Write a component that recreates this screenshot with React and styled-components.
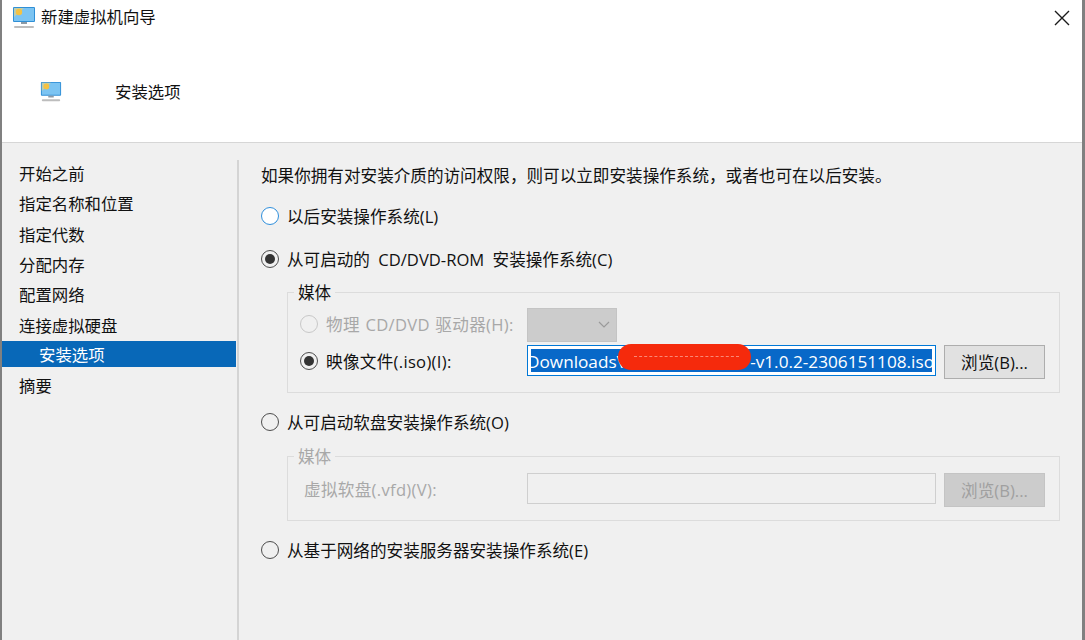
import styled, { createGlobalStyle } from "styled-components";

const GlobalStyle = createGlobalStyle`
  html, body {
    margin: 0;
    padding: 0;
    background: #f0f0f0;
  }
  * {
    box-sizing: border-box;
  }
`;

const steps = ["开始之前", "指定名称和位置", "指定代数", "分配内存", "配置网络", "连接虚拟硬盘", "安装选项", "摘要"];

function VmIcon({ size }) {
  return (
    <svg width={size} height={size} viewBox="0 0 24 24">
      <rect x="1" y="1" width="22" height="15" rx="1" fill="#2f8fd6" />
      <rect x="2" y="2" width="20" height="13" fill="#7cc4f2" />
      <path d="M2 2h10L2 11z" fill="#f7d774" opacity="0.55" />
      <circle cx="7" cy="6" r="3.2" fill="#f5c242" />
      <rect x="9" y="16" width="6" height="2" fill="#8c9aa6" />
      <rect x="2" y="20" width="20" height="2" rx="1" fill="#bdbdbd" />
    </svg>
  );
}

export default function App() {
  return (
    <>
      <GlobalStyle />
      <Window>
        <Header>
          <TitleBar>
            <VmIcon size={24} />
            <Title>新建虚拟机向导</Title>
            <CloseIcon width="16" height="16" viewBox="0 0 16 16">
              <path d="M1 1l14 14M15 1L1 15" stroke="#1a1a1a" strokeWidth="1.4" />
            </CloseIcon>
          </TitleBar>
          <PageHead>
            <VmIcon size={22} />
            <PageTitle>安装选项</PageTitle>
          </PageHead>
        </Header>
        <Body>
          <Sidebar>
            {steps.map((step, i) => (
              <Step key={step} $active={i === 6}>{step}</Step>
            ))}
          </Sidebar>
          <Content>
            <Intro>如果你拥有对安装介质的访问权限，则可以立即安装操作系统，或者也可在以后安装。</Intro>
            <Option $top={16}>
              <Radio $focus />
              以后安装操作系统(L)
            </Option>
            <Option $top={19}>
              <Radio $checked />
              从可启动的 CD/DVD-ROM 安装操作系统(C)
            </Option>
            <Group $top={21} $height={101}>
              <Legend>媒体</Legend>
              <GroupRow $height={34} $top={15}>
                <RowLabel $disabled>
                  <Radio $disabled />
                  物理 CD/DVD 驱动器(H):
                </RowLabel>
                <Select>
                  <svg width="12" height="8" viewBox="0 0 12 8">
                    <path d="M1 1l5 5 5-5" fill="none" stroke="#9a9a9a" strokeWidth="1.2" />
                  </svg>
                </Select>
              </GroupRow>
              <GroupRow $height={34} $top={3}>
                <RowLabel>
                  <Radio $checked />
                  映像文件(.iso)(I):
                </RowLabel>
                <PathInput>
                  <Selection>
                    <span>Downloads\</span>
                    <span>-v1.0.2-2306151108.iso</span>
                  </Selection>
                  <Redaction />
                </PathInput>
                <Browse>浏览(B)...</Browse>
              </GroupRow>
            </Group>
            <Option $top={17}>
              <Radio />
              从可启动软盘安装操作系统(O)
            </Option>
            <Group $top={22} $height={65}>
              <Legend $disabled>媒体</Legend>
              <GroupRow $height={34} $top={16}>
                <RowLabel $disabled $indent>虚拟软盘(.vfd)(V):</RowLabel>
                <EmptyInput />
                <Browse $disabled>浏览(B)...</Browse>
              </GroupRow>
            </Group>
            <Option $top={17}>
              <Radio />
              从基于网络的安装服务器安装操作系统(E)
            </Option>
          </Content>
        </Body>
      </Window>
    </>
  );
}

const Window = styled.div`
  width: 1085px;
  height: 640px;
  overflow: hidden;
  display: flex;
  flex-direction: column;
  background: #f0f0f0;
  border-left: 2px solid #808080;
  border-right: 3px solid #808080;
  color: #111111;
  font-family: "Open Sans", "Noto Sans CJK SC", "Liberation Sans", sans-serif;
  font-size: 16.4px;
`;

const Header = styled.header`
  height: 143px;
  flex: none;
  background: #ffffff;
  border-bottom: 1px solid #d6d6d6;
`;

const TitleBar = styled.div`
  height: 36px;
  display: flex;
  align-items: center;
  padding: 0 12px 0 10px;
  gap: 5px;
`;

const Title = styled.div`
  flex: 1;
  line-height: 34px;
  height: 36px;
`;

const CloseIcon = styled.svg`
  flex: none;
`;

const PageHead = styled.div`
  height: 40px;
  margin-top: 36px;
  display: flex;
  align-items: center;
  padding-left: 38px;
  gap: 53px;
`;

const PageTitle = styled.div`
  margin-bottom: 2px;
`;

const Body = styled.div`
  flex: 1;
  display: flex;
  padding-top: 15px;
`;

const Sidebar = styled.nav`
  width: 235px;
  flex: none;
`;

const Step = styled.div`
  height: 30.3px;
  width: 234px;
  display: flex;
  align-items: center;
  padding-left: ${(p) => (p.$active ? "37px" : "17px")};
  background: ${(p) => (p.$active ? "#0868b8" : "transparent")};
  color: ${(p) => (p.$active ? "#ffffff" : "#111111")};
  ${(p) => p.$active && "height: 26px; margin: 1px 0 3px;"}
`;

const Content = styled.main`
  flex: 1;
  margin-top: 2px;
  border-left: 2px solid #d4d4d4;
  padding: 4px 22px 0 22px;
  font-size: 16.6px;
`;

const Intro = styled.div`
  height: 24px;
  line-height: 24px;
  white-space: nowrap;
`;

const Option = styled.div`
  height: 24px;
  margin-top: ${(p) => p.$top}px;
  display: flex;
  align-items: center;
  gap: 8px;
  white-space: nowrap;
  word-spacing: 4px;
`;

const Radio = styled.span`
  width: 18px;
  height: 18px;
  flex: none;
  border-radius: 50%;
  border: 1.7px solid ${(p) => (p.$focus ? "#2f8fdc" : p.$disabled ? "#c8c8c8" : "#4d4d4d")};
  display: flex;
  align-items: center;
  justify-content: center;
  background: ${(p) => (p.$focus ? "#ffffff" : "transparent")};
  &::after {
    content: "";
    display: ${(p) => (p.$checked ? "block" : "none")};
    width: 10px;
    height: 10px;
    border-radius: 50%;
    background: #333333;
  }
`;

const Group = styled.section`
  position: relative;
  height: ${(p) => p.$height}px;
  margin: ${(p) => p.$top}px 0 0 26px;
  border: 1px solid #dcdcdc;
  padding: 0 14px 0 12px;
`;

const Legend = styled.div`
  position: absolute;
  top: -11px;
  left: 6px;
  padding: 0 4px;
  background: #f0f0f0;
  line-height: 22px;
  color: ${(p) => (p.$disabled ? "#a8a8a8" : "#111111")};
`;

const GroupRow = styled.div`
  height: ${(p) => p.$height}px;
  margin-top: ${(p) => p.$top}px;
  display: flex;
  align-items: center;
`;

const RowLabel = styled.div`
  width: 227px;
  flex: none;
  display: flex;
  align-items: center;
  gap: 8px;
  margin-bottom: 2px;
  white-space: nowrap;
  letter-spacing: 0.3px;
  word-spacing: 1px;
  color: ${(p) => (p.$disabled ? "#a8a8a8" : "#111111")};
  padding-left: ${(p) => (p.$indent ? "4px" : "0")};
`;

const Select = styled.div`
  width: 90px;
  height: 34px;
  background: #cccccc;
  border: 1px solid #c4c4c4;
  display: flex;
  align-items: center;
  justify-content: flex-end;
  padding-right: 6px;
`;

const PathInput = styled.div`
  position: relative;
  align-self: flex-start;
  width: 409px;
  height: 31px;
  flex: none;
  margin-right: 8px;
  padding: 3px;
  background: #ffffff;
  border: 1px solid #0078d7;
`;

const Selection = styled.div`
  height: 100%;
  display: flex;
  justify-content: space-between;
  align-items: center;
  overflow: hidden;
  background: #0868c8;
  color: #ffffff;
  font-size: 17.2px;
  white-space: nowrap;
  span {
    margin-top: 2px;
  }
  span:first-child {
    margin-left: -4px;
  }
  span:last-child {
    margin-right: -2px;
  }
`;

const Redaction = styled.div`
  position: absolute;
  left: 90px;
  top: -2px;
  width: 133px;
  height: 26px;
  border-radius: 13px;
  background: #f52a0c;
  &::after {
    content: "";
    position: absolute;
    left: 16px;
    right: 12px;
    top: 12px;
    border-top: 1px dashed rgba(255, 200, 190, 0.6);
  }
`;

const EmptyInput = styled.div`
  align-self: flex-start;
  width: 409px;
  height: 31px;
  flex: none;
  margin-right: 8px;
  background: #f0f0f0;
  border: 1px solid #cfcfcf;
`;

const Browse = styled.div`
  width: 101px;
  height: 34px;
  flex: none;
  display: flex;
  align-items: center;
  justify-content: center;
  background: ${(p) => (p.$disabled ? "#cccccc" : "#e1e1e1")};
  border: 1px solid ${(p) => (p.$disabled ? "#c4c4c4" : "#adadad")};
  color: ${(p) => (p.$disabled ? "#a0a0a0" : "#111111")};
`;
